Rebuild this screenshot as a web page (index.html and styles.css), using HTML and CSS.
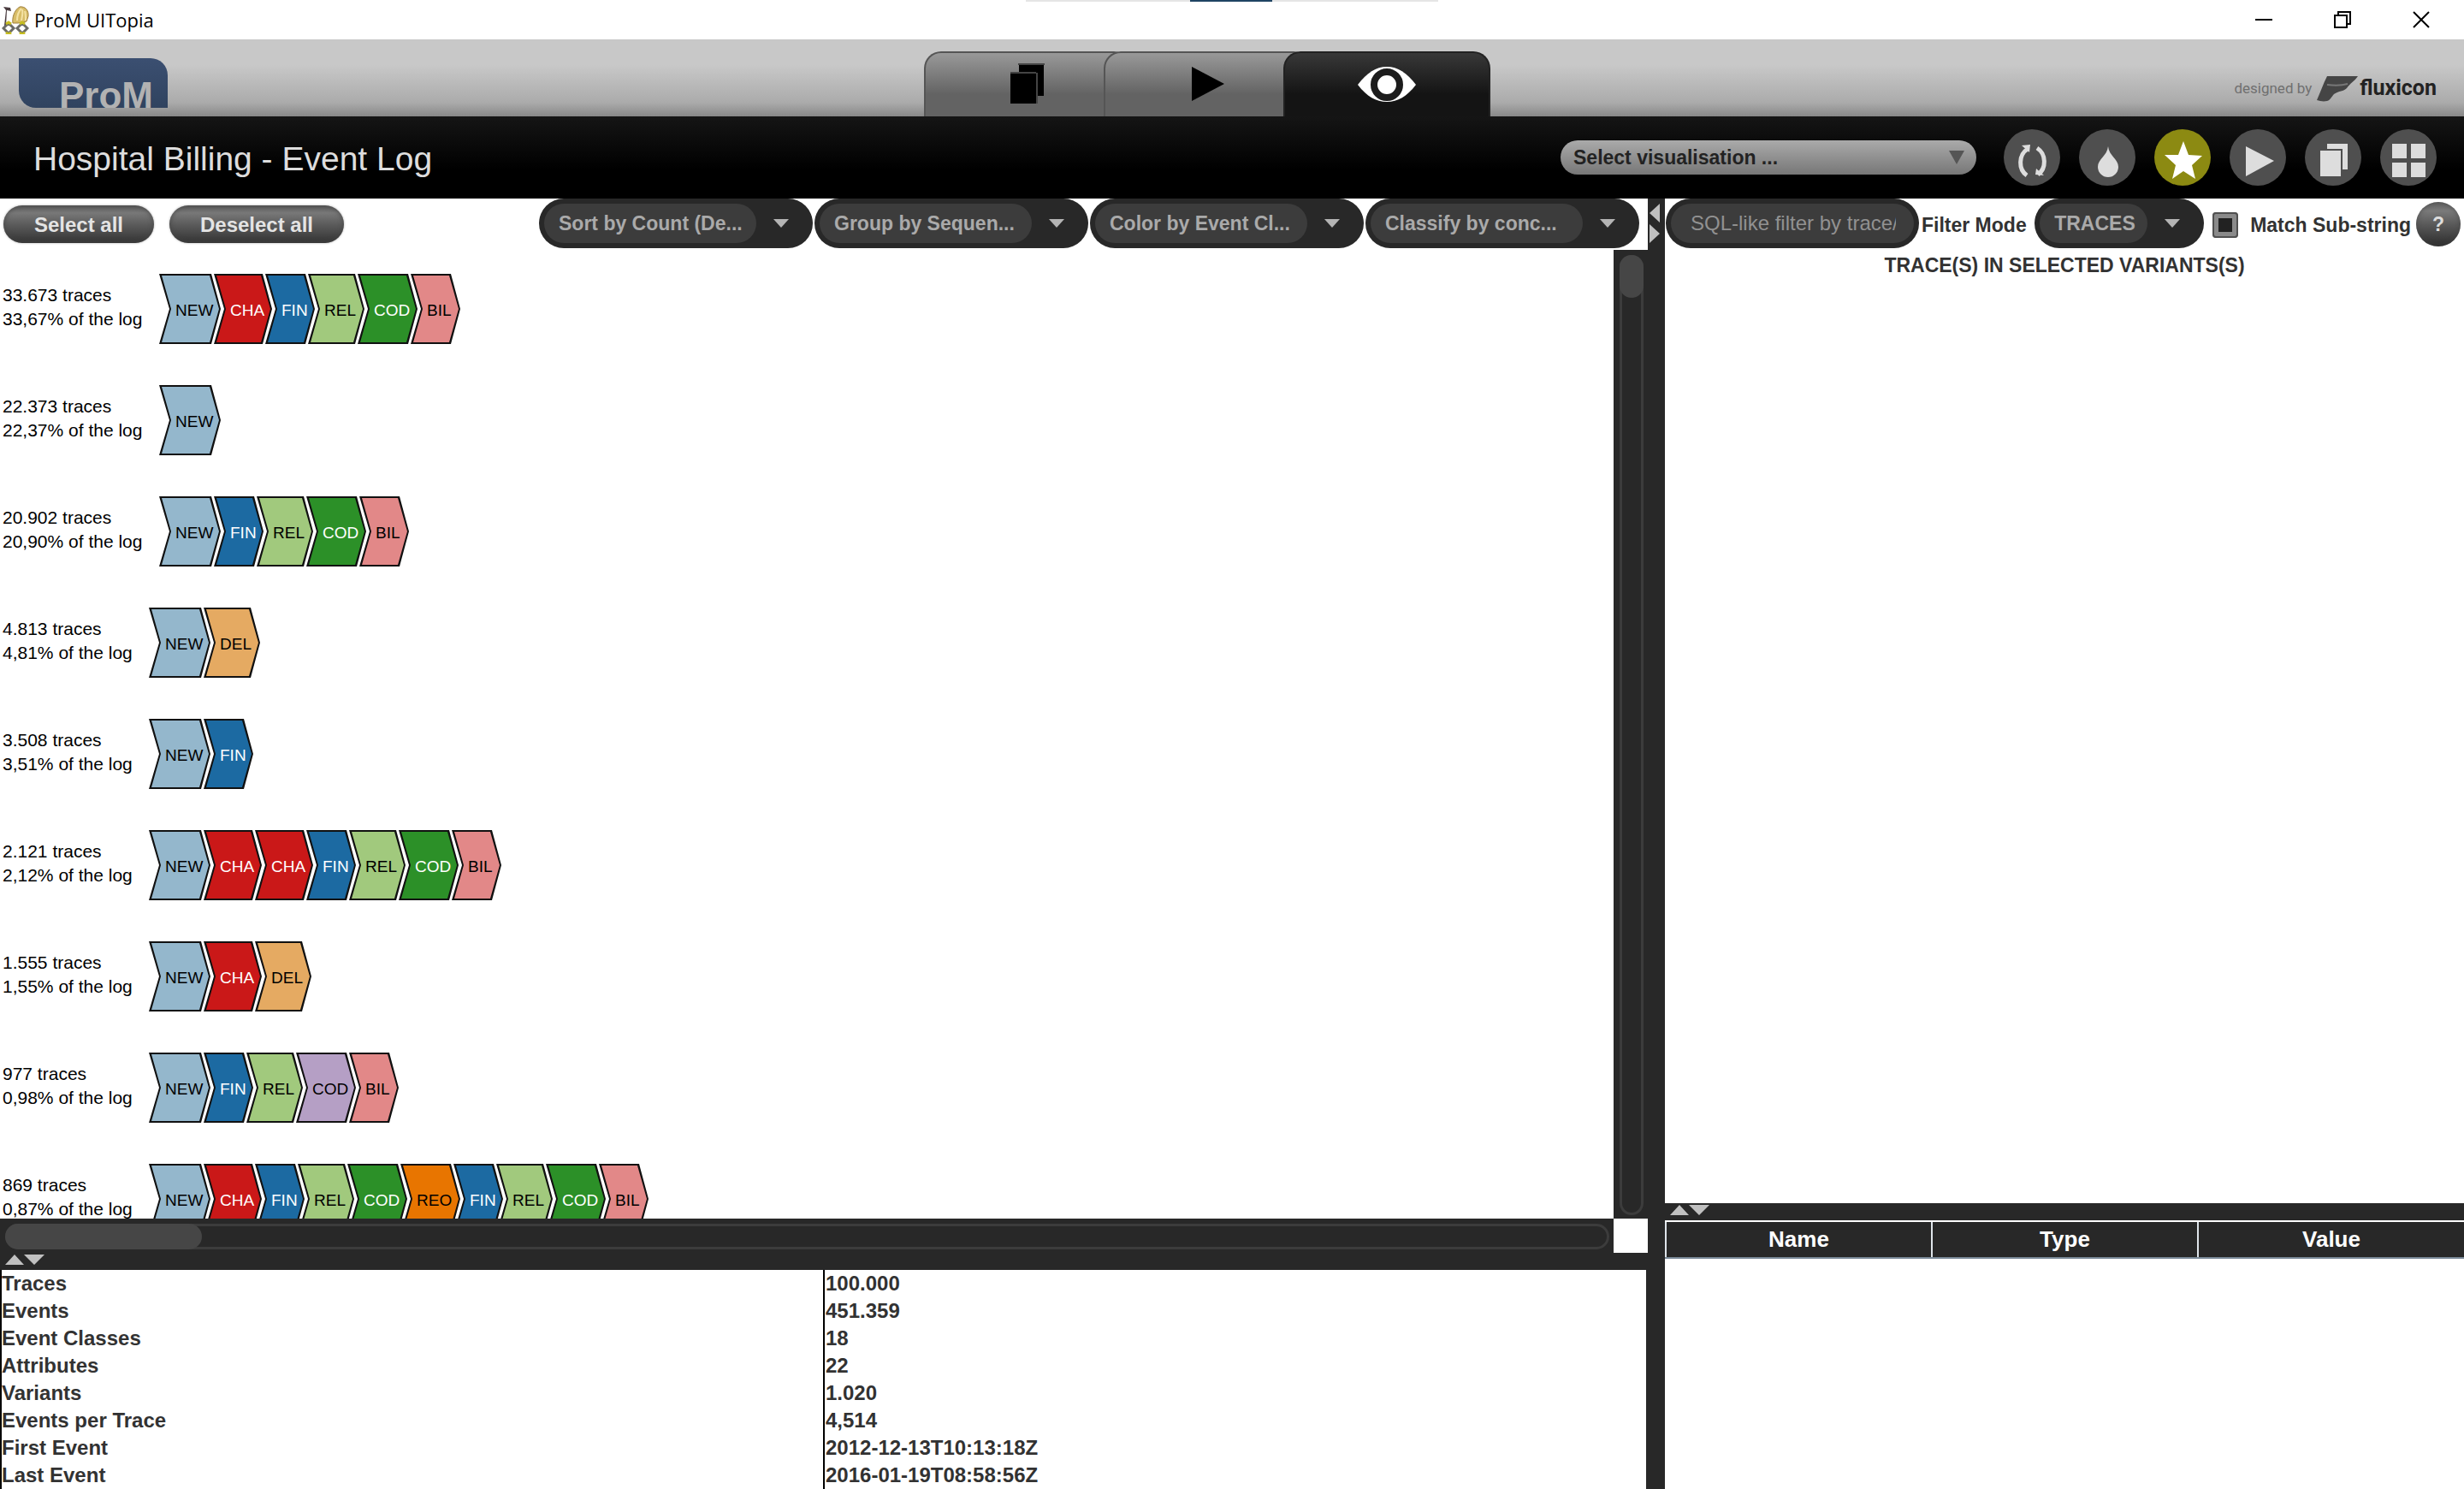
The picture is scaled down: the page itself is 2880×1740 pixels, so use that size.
FILE: index.html
```
<!DOCTYPE html>
<html lang="en">
<head>
<meta charset="utf-8">
<title>ProM UITopia</title>
<link rel="stylesheet" href="styles.css">
</head>
<body>
<header class="titlebar">
  <svg class="app-icon" width="32" height="34" viewBox="0 0 32 34" aria-hidden="true">
    <path d="M2 2l8 1 1 4-5 -1-1 18H3L5 6z" fill="#4a3c40"/>
    <path d="M13 21c-1-5 1-15 8-19 6-1 11 4 10 11l-2 6-10 2z" fill="#d8bd68" stroke="#a08040"/>
    <path d="M18 18c0-6 2-11 5-14M23 18c1-5 2-9 1-13M28 18c0-5 0-8-1-11" fill="none" stroke="#f4e2a4" stroke-width="2"/>
    <path d="M2 27l6-6 6 6-6 6zM18 27l6-6 6 6-6 6z" fill="#fff" stroke="#6b6b66" stroke-width="3"/>
    <path d="M5 22l3-2 3 2M5 32l3 2 3-2M21 22l3-2 3 2M21 32l3 2 3-2" fill="none" stroke="#c6bd20" stroke-width="3"/>
  </svg>
  <span class="app-name">ProM UITopia</span>
  <div class="window-strip"><span></span></div>
  <div class="window-buttons">
    <button type="button" aria-label="Minimize"><svg width="20" height="20" viewBox="0 0 20 20"><path d="M0 10h20" stroke="#000" stroke-width="2"/></svg></button>
    <button type="button" aria-label="Restore"><svg width="20" height="20" viewBox="0 0 20 20"><path d="M1 5h14v14H1zM5 5V1h14v14h-4" fill="none" stroke="#000" stroke-width="2"/></svg></button>
    <button type="button" aria-label="Close"><svg width="20" height="20" viewBox="0 0 20 20"><path d="M1 1l18 18M19 1L1 19" stroke="#000" stroke-width="2"/></svg></button>
  </div>
</header>

<div class="topbar">
  <div class="logo"><span>ProM</span></div>
  <nav class="tabs">
    <button type="button" class="tab" aria-label="Workspace"><svg width="40" height="48" viewBox="0 0 40 48"><path d="M10 2h29v36h-7V11H10z"/><path d="M0 12h30v35H0z"/><path d="M9 1h31M0 11h30M31 11v36" stroke="#444" stroke-width="2" fill="none"/></svg></button>
    <button type="button" class="tab" aria-label="Actions"><svg width="40" height="48" viewBox="0 0 40 48"><path d="M2 4l38 20L2 44z"/></svg></button>
    <button type="button" class="tab tab-active" aria-label="Views"><svg width="70" height="48" viewBox="0 0 70 48"><path d="M1 25C12 11 22 4 35 4s23 7 34 21C58 39 48 45 35 45S12 39 1 25z" fill="#fff"/><circle cx="35" cy="25" r="15" fill="#fff" stroke="#1c1c1c" stroke-width="8"/></svg></button>
  </nav>
  <div class="credit">
    <span class="credit-by">designed by</span>
    <svg width="48" height="32" viewBox="0 0 48 32" aria-hidden="true"><path d="M12 2h36c-4 6-9 8-13 14-4 4-9 3-15 7-3 3-4 7-8 8-5 1-8 0-12-1C4 21 7 12 12 2z" fill="#454545"/><path d="M12 12c8 1 17 1 24-1" stroke="#777" stroke-width="2" fill="none"/></svg>
    <span class="credit-name">fluxicon</span>
  </div>
</div>

<div class="viewbar">
  <h1>Hospital Billing - Event Log</h1>
  <div class="vis-select">
    <select aria-label="Visualisation"><option>Select visualisation ...</option></select>
    <svg class="vis-arrow" width="18" height="16" viewBox="0 0 18 16"><path d="M0 0h18L9 16z" fill="#555"/></svg>
  </div>
  <div class="round-buttons">
    <button type="button" aria-label="Refresh"><svg width="66" height="66" viewBox="0 0 66 66"><path d="M28 23c-11 7-11 24-1 31M39 22c11 7 11 24 1 31" fill="none" stroke="#ddd" stroke-width="5"/><path d="M21 19l10-1-1 9zM37 53l10 1-9-8z" fill="#ddd"/></svg></button>
    <button type="button" aria-label="Colour"><svg width="66" height="66" viewBox="0 0 66 66"><path d="M34 20c1 11 12 15 12 24a12 12 0 0 1-24 0c0-9 11-13 12-24z" fill="#ddd"/></svg></button>
    <button type="button" class="starred" aria-label="Favourite"><svg width="66" height="66" viewBox="0 0 66 66"><path d="M34 14l6 16 16 1-12 11 4 16-14-9-13 9 4-16-13-12 16 0z" fill="#fff"/></svg></button>
    <button type="button" aria-label="Use"><svg width="66" height="66" viewBox="0 0 66 66"><path d="M19 20l33 17-33 18z" fill="#ddd"/></svg></button>
    <button type="button" aria-label="Copy"><svg width="66" height="66" viewBox="0 0 66 66"><path d="M26 17h24v30h-6V23H26z" fill="#ddd"/><path d="M18 25h24v30H18z" fill="#ddd"/></svg></button>
    <button type="button" aria-label="Grid"><svg width="66" height="66" viewBox="0 0 66 66"><path d="M14 17h17v17H14zM36 17h17v17H36zM14 39h17v17H14zM36 39h17v17H36z" fill="#ddd"/></svg></button>
  </div>
</div>

<main class="workspace">
  <section class="left">
    <div class="toolbar">
      <button type="button" class="pill pill-select">Select all</button>
      <button type="button" class="pill pill-deselect">Deselect all</button>
      <div class="combos">
        <div class="combo"><select aria-label="Sort"><option>Sort by Count (De...</option></select><svg width="18" height="12" viewBox="0 0 18 12"><path d="M0 1h18L9 11z"/></svg></div>
        <div class="combo"><select aria-label="Group"><option>Group by Sequen...</option></select><svg width="18" height="12" viewBox="0 0 18 12"><path d="M0 1h18L9 11z"/></svg></div>
        <div class="combo"><select aria-label="Color"><option>Color by Event Cl...</option></select><svg width="18" height="12" viewBox="0 0 18 12"><path d="M0 1h18L9 11z"/></svg></div>
        <div class="combo"><select aria-label="Classify"><option>Classify by conc...</option></select><svg width="18" height="12" viewBox="0 0 18 12"><path d="M0 1h18L9 11z"/></svg></div>
      </div>
    </div>
    <div class="scroll-pane">
      <div class="variants">
        <div class="variant wide"><p>33.673 traces<br>33,67% of the log</p><div class="chain"><span class="ev new">NEW</span><span class="ev cha">CHA</span><span class="ev fin">FIN</span><span class="ev rel">REL</span><span class="ev cod">COD</span><span class="ev bil">BIL</span></div></div>
        <div class="variant wide"><p>22.373 traces<br>22,37% of the log</p><div class="chain"><span class="ev new">NEW</span></div></div>
        <div class="variant wide"><p>20.902 traces<br>20,90% of the log</p><div class="chain"><span class="ev new">NEW</span><span class="ev fin">FIN</span><span class="ev rel">REL</span><span class="ev cod">COD</span><span class="ev bil">BIL</span></div></div>
        <div class="variant"><p>4.813 traces<br>4,81% of the log</p><div class="chain"><span class="ev new">NEW</span><span class="ev del">DEL</span></div></div>
        <div class="variant"><p>3.508 traces<br>3,51% of the log</p><div class="chain"><span class="ev new">NEW</span><span class="ev fin">FIN</span></div></div>
        <div class="variant"><p>2.121 traces<br>2,12% of the log</p><div class="chain"><span class="ev new">NEW</span><span class="ev cha">CHA</span><span class="ev cha">CHA</span><span class="ev fin">FIN</span><span class="ev rel">REL</span><span class="ev cod">COD</span><span class="ev bil">BIL</span></div></div>
        <div class="variant"><p>1.555 traces<br>1,55% of the log</p><div class="chain"><span class="ev new">NEW</span><span class="ev cha">CHA</span><span class="ev del">DEL</span></div></div>
        <div class="variant"><p>977 traces<br>0,98% of the log</p><div class="chain"><span class="ev new">NEW</span><span class="ev fin">FIN</span><span class="ev rel">REL</span><span class="ev cod-nok">COD</span><span class="ev bil">BIL</span></div></div>
        <div class="variant"><p>869 traces<br>0,87% of the log</p><div class="chain"><span class="ev new">NEW</span><span class="ev cha">CHA</span><span class="ev fin">FIN</span><span class="ev rel">REL</span><span class="ev cod">COD</span><span class="ev reo">REO</span><span class="ev fin">FIN</span><span class="ev rel">REL</span><span class="ev cod">COD</span><span class="ev bil">BIL</span></div></div>
      </div>
      <div class="vscroll"><div class="track"><div class="thumb"></div></div></div>
      <div class="hscroll"><div class="track"><div class="thumb"></div></div></div>
      <div class="corner"></div>
    </div>
    <div class="splitter"><svg width="46" height="12" viewBox="0 0 46 12"><path d="M0 12L11 0l11 12zM22 0h24L34 12z"/></svg></div>
    <table class="stats">
      <tr><th scope="row">Traces</th><td>100.000</td></tr>
      <tr><th scope="row">Events</th><td>451.359</td></tr>
      <tr><th scope="row">Event Classes</th><td>18</td></tr>
      <tr><th scope="row">Attributes</th><td>22</td></tr>
      <tr><th scope="row">Variants</th><td>1.020</td></tr>
      <tr><th scope="row">Events per Trace</th><td>4,514</td></tr>
      <tr><th scope="row">First Event</th><td>2012-12-13T10:13:18Z</td></tr>
      <tr><th scope="row">Last Event</th><td>2016-01-19T08:58:56Z</td></tr>
    </table>
  </section>

  <div class="divider"><svg width="12" height="46" viewBox="0 0 12 46"><path d="M12 0v22L0 11zM0 24v22l12-11z"/></svg></div>

  <section class="right">
    <div class="filterbar">
      <div class="search"><input type="text" aria-label="Filter" placeholder="SQL-like filter by trace/event attributes"></div>
      <label class="mode-label" for="mode">Filter Mode</label>
      <div class="combo combo-mode"><select id="mode"><option>TRACES</option></select><svg width="18" height="12" viewBox="0 0 18 12"><path d="M0 1h18L9 11z"/></svg></div>
      <input class="check" type="checkbox" id="substring">
      <label class="check-label" for="substring">Match Sub-string</label>
      <button type="button" class="help">?</button>
    </div>
    <h2>TRACE(S) IN SELECTED VARIANTS(S)</h2>
    <div class="trace-pane"></div>
    <div class="splitter"><svg width="46" height="12" viewBox="0 0 46 12"><path d="M0 12L11 0l11 12zM22 0h24L34 12z"/></svg></div>
    <div class="attributes">
      <table>
        <thead><tr><th scope="col">Name</th><th scope="col">Type</th><th scope="col">Value</th></tr></thead>
      </table>
    </div>
  </section>
</main>
</body>
</html>
```
FILE: styles.css
```
* {
  box-sizing: border-box;
}

body {
  margin: 0;
  height: 100vh;
  display: flex;
  flex-direction: column;
  overflow: hidden;
  background: #fff;
  color: #323232;
  font-family: "Liberation Sans", Arial, sans-serif;
  font-size: 24px;
}

button,
select,
input {
  margin: 0;
  padding: 0;
  border: 0;
  font: inherit;
}

svg {
  display: block;
  flex: none;
}

/* Window title bar */
.titlebar {
  position: relative;
  flex: none;
  display: flex;
  align-items: center;
  height: 46px;
  padding: 0 40px 0 2px;
}

.app-name {
  flex: 1;
  margin-left: 6px;
  color: #000;
  font-family: "Open Sans", "Noto Sans", sans-serif;
  font-size: 22px;
}

.window-strip {
  position: absolute;
  top: 0;
  left: 1199px;
  width: 482px;
  height: 2px;
  padding-left: 192px;
  background: #e5e5e5;
}

.window-strip span {
  display: block;
  width: 96px;
  height: 2px;
  background: #1f4463;
}

.window-buttons {
  display: flex;
  gap: 72px;
}

.window-buttons button {
  background: none;
}

/* Grey bar with logo, tabs and credit */
.topbar {
  flex: none;
  display: grid;
  grid-template-columns: 1080px auto 1fr;
  height: 90px;
  background: linear-gradient(#c8c8c8 0%, #c8c8c8 33%, #ababab 82%, #888 100%);
}

.logo {
  width: 174px;
  height: 58px;
  margin: 22px 0 0 22px;
  padding: 19px 0 0 47px;
  overflow: hidden;
  border-radius: 0 20px 0 20px;
  background: linear-gradient(#3b4f71, #30435f);
  color: #b2b2b2;
  font-size: 44px;
  font-weight: bold;
  line-height: 50px;
}

.tabs {
  display: flex;
  align-items: flex-end;
}

.tab {
  display: flex;
  justify-content: center;
  width: 242px;
  height: 76px;
  padding-top: 12px;
  border: 2px solid #555;
  border-bottom: 0;
  border-radius: 20px 20px 0 0;
  background: linear-gradient(#999, #636363 65%);
}

.tab + .tab {
  margin-left: -32px;
}

.tab-active {
  border-color: #222;
  background: linear-gradient(#383838, #141414 65%);
}

.credit {
  display: flex;
  justify-content: flex-end;
  align-items: center;
  padding: 23px 32px 0 0;
}

.credit-by {
  margin-right: 6px;
  color: #707070;
  font-family: Roboto, sans-serif;
  font-size: 17px;
}

.credit-name {
  margin-left: 2px;
  color: #222;
  font-family: Roboto, sans-serif;
  font-size: 25px;
  font-weight: bold;
}

/* Black bar with the view's title and actions */
.viewbar {
  flex: none;
  display: flex;
  align-items: center;
  height: 96px;
  padding-right: 32px;
  background: linear-gradient(#151515, #000 65%);
}

h1 {
  flex: 1;
  margin: 0 0 0 39px;
  padding-top: 4px;
  color: #ddd;
  font-size: 39px;
  font-weight: normal;
}

.vis-select {
  position: relative;
  width: 486px;
  margin-right: 32px;
}

.vis-select select {
  display: block;
  appearance: none;
  width: 100%;
  height: 40px;
  padding-left: 15px;
  border-radius: 20px;
  background: linear-gradient(#aaa, #777);
  color: #222;
  font-size: 23px;
  font-weight: bold;
}

.vis-arrow {
  position: absolute;
  top: 12px;
  right: 14px;
  pointer-events: none;
}

.round-buttons {
  display: flex;
  gap: 22px;
}

.round-buttons button {
  width: 66px;
  height: 66px;
  border-radius: 50%;
  background: #4f4f4f;
}

.round-buttons .starred {
  background: #8c8a12;
}

/* Work area */
.workspace {
  flex: 1;
  min-height: 0;
  display: grid;
  grid-template-columns: minmax(0, 1fr) 20px 934px;
}

.left,
.right {
  display: flex;
  flex-direction: column;
  min-height: 0;
}

.toolbar {
  flex: none;
  display: flex;
  align-items: center;
  height: 60px;
  padding: 0 10px 0 4px;
}

.pill {
  height: 44px;
  margin-right: 18px;
  padding-top: 2px;
  border-radius: 22px;
  background: linear-gradient(#5a5a5a, #787878 20%, #5c5c5c 50%, #333);
  box-shadow: inset 0 0 4px 2px #4448, 0 0 2px 1px #ddd;
  color: #e4e4e4;
  font-weight: bold;
}

.pill-select {
  width: 176px;
}

.pill-deselect {
  width: 204px;
}

.combos {
  display: flex;
  gap: 2px;
  margin-left: auto;
}

.combo {
  display: flex;
  align-items: center;
  width: 320px;
  height: 58px;
  margin-bottom: 2px;
  padding: 6px 28px 6px 6px;
  border-radius: 29px;
  background: #282828;
}

.combo select {
  appearance: none;
  flex: 1;
  min-width: 0;
  height: 46px;
  margin-right: 20px;
  padding-left: 17px;
  border-radius: 23px;
  background: #3c3c3c;
  color: #aaa;
  font-size: 23px;
  font-weight: bold;
}

.combo path {
  fill: #b4b4b4;
}

.scroll-pane {
  flex: 1;
  min-height: 0;
  display: grid;
  grid-template: minmax(0, 1fr) 40px / minmax(0, 1fr) 40px;
}

.variants {
  overflow: hidden;
  padding-top: 28px;
}

.variant {
  display: flex;
  height: 82px;
  margin-bottom: 48px;
}

.variant p {
  width: 174px;
  margin: 0;
  padding: 11px 0 0 3px;
  color: #000;
  font-size: 21px;
  line-height: 28px;
  white-space: nowrap;
}

.variant.wide p {
  width: 186px;
}

.chain {
  display: flex;
}

/* Arrow-shaped event: black outline with the class colour laid inside it */
.ev {
  position: relative;
  z-index: 0;
  width: 66px;
  height: 82px;
  margin-right: -8px;
  padding-left: 19px;
  background: #111;
  clip-path: polygon(0 0, calc(100% - 11px) 0, 100% 50%, calc(100% - 11px) 100%, 0 100%, 12px 50%);
  color: #000;
  font-size: 19px;
  line-height: 86px;
}

.ev::before {
  content: "";
  position: absolute;
  inset: 0;
  z-index: -1;
  background: #a1c97d;
  clip-path: polygon(3px 2px, calc(100% - 13px) 2px, calc(100% - 2px) 50%, calc(100% - 13px) calc(100% - 2px), 3px calc(100% - 2px), 14px 50%);
}

.new { width: 72px; }
.cha { width: 68px; }
.fin, .bil { width: 58px; }
.cod, .cod-nok, .reo { width: 70px; }
.cha, .fin, .cod { color: #fff; }
.new::before { background: #94b7cc; }
.cha::before { background: #ca1818; }
.fin::before { background: #1c6aa2; }
.cod::before { background: #2c9028; }
.bil::before { background: #e28888; }
.del::before { background: #e5aa62; }
.cod-nok::before { background: #b59fc5; }
.reo::before { background: #e87500; }

.vscroll {
  padding: 6px 5px 4px 7px;
  background: #282828;
}

.hscroll {
  padding: 6px 5px 4px 6px;
  background: #282828;
}

.track {
  height: 100%;
  border: 3px solid #3c3c3c;
  border-radius: 15px;
}

.thumb {
  border-radius: 15px;
  background: #464646;
}

.vscroll .thumb {
  height: 50px;
  margin: -3px;
}

.hscroll .thumb {
  width: 230px;
  height: 30px;
  margin: -3px;
}

.splitter {
  flex: none;
  height: 20px;
  padding: 2px 6px;
  background: #282828;
}

.splitter path,
.divider path {
  fill: #c0c0c0;
}

.divider {
  padding: 6px 2px;
  background: #282828;
}

.stats {
  width: 100%;
  flex: none;
  table-layout: fixed;
  border-collapse: collapse;
  border-right: 2px solid #282828;
  font-weight: bold;
  line-height: 32px;
}

.stats th,
.stats td {
  padding: 0;
  border-left: 2px solid #000;
  text-align: left;
}

.stats td {
  padding-left: 1px;
}

/* Filter side */
.filterbar {
  flex: none;
  display: flex;
  align-items: center;
  height: 60px;
  padding: 0 4px 0 1px;
  font-size: 23px;
  font-weight: bold;
  white-space: nowrap;
}

.search {
  flex: none;
  width: 296px;
  height: 58px;
  margin: 0 3px 2px 0;
  padding: 6px;
  border-radius: 29px;
  background: #282828;
}

.search input {
  display: block;
  width: 100%;
  height: 46px;
  padding: 0 21px 0 23px;
  border-radius: 23px;
  background: #3c3c3c;
  color: #aaa;
  font-size: 24px;
}

.search input::placeholder {
  color: #919191;
  font-weight: normal;
  opacity: 1;
}

.combo-mode {
  flex: none;
  width: 198px;
  margin-left: auto;
}

.check {
  appearance: none;
  flex: none;
  width: 30px;
  height: 30px;
  margin: 2px 14px 0 10px;
  border: 7px solid #8a8a8a;
  border-radius: 4px;
  outline: 2px solid #505050;
  outline-offset: -2px;
  background: #222;
}

.check-label,
.mode-label {
  padding-top: 3px;
}

.help {
  flex: none;
  width: 52px;
  height: 52px;
  margin-left: 6px;
  border-radius: 50%;
  background: linear-gradient(#606060, #7a7a7a 20%, #5a5a5a 50%, #2c2c2c);
  box-shadow: inset 0 0 4px 2px #4446;
  color: #ddd;
  font-weight: bold;
}

h2 {
  flex: none;
  margin: 0;
  padding-top: 2px;
  font-size: 23px;
  line-height: 32px;
  text-align: center;
}

.trace-pane {
  flex: 1;
}

.attributes {
  flex: none;
  height: 314px;
  padding-top: 2px;
}

.attributes table {
  width: 100%;
  table-layout: fixed;
  border-collapse: collapse;
}

.attributes th {
  height: 42px;
  padding: 0;
  border-bottom: 2px solid #7a8a99;
  border-left: 2px solid #dfe5ea;
  background: #282828;
  color: #fff;
  font-size: 26px;
}
```
